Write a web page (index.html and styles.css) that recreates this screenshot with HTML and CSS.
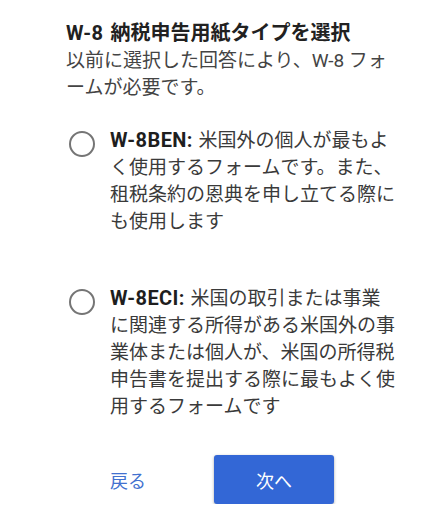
FILE: index.html
```html
<!DOCTYPE html>
<html lang="ja">
<head>
<meta charset="utf-8">
<link rel="stylesheet" href="styles.css">
</head>
<body>
<main class="page">
  <h1 class="title"><span class="title-code">W-8</span> 納税申告用紙タイプを選択</h1>
  <p class="subtitle">以前に選択した回答により、W-8 フォームが必要です。</p>
  <div class="options">
    <label class="option">
      <span class="radio"></span>
      <span class="option-text"><b class="code">W-8BEN:</b> 米国外の個人が最もよく使用するフォームです。また、租税条約の恩典を申し立てる際にも使用します</span>
    </label>
    <label class="option">
      <span class="radio"></span>
      <span class="option-text"><b class="code">W-8ECI:</b> 米国の取引または事業に関連する所得がある米国外の事業体または個人が、米国の所得税申告書を提出する際に最もよく使用するフォームです</span>
    </label>
  </div>
  <div class="actions">
    <span class="back">戻る</span>
    <span class="next">次へ</span>
  </div>
</main>
</body>
</html>
```

FILE: styles.css
```css
html, body {
  margin: 0;
  padding: 0;
  background: #ffffff;
}

.page {
  font-family: Roboto, "Noto Sans CJK JP", sans-serif;
  padding: 19.5px 0 0 66px;
  width: 330px;
  color: #3c3c3c;
}

.title {
  margin: 0;
  font-size: 20px;
  line-height: 27px;
  font-weight: 700;
  color: #212121;
}

.title-code {
  letter-spacing: 0.4px;
  margin-right: 2px;
}

.subtitle {
  margin: 0;
  font-size: 19px;
  line-height: 27px;
  color: #444444;
}

.options {
  display: flex;
  flex-direction: column;
  gap: 50px;
  margin-top: 26px;
}

.option {
  display: flex;
  align-items: flex-start;
  gap: 15.5px;
  padding-left: 2.5px;
}

.radio {
  flex: none;
  box-sizing: border-box;
  width: 26px;
  height: 26px;
  margin-top: 4.5px;
  border: 2.5px solid #757575;
  border-radius: 50%;
}

.option-text {
  width: 286px;
  font-size: 19px;
  line-height: 27px;
  color: #3a3a3a;
}

.code {
  color: #1e1e1e;
  font-weight: 700;
  font-size: 20px;
  line-height: 1;
  letter-spacing: 0.4px;
  margin-right: 1px;
}

.actions {
  display: flex;
  align-items: center;
  margin-top: 35.5px;
  padding-left: 44px;
}

.back {
  font-size: 18px;
  color: #4271cf;
  width: 104px;
}

.next {
  display: flex;
  align-items: center;
  justify-content: center;
  width: 120px;
  height: 49px;
  background: #3367d6;
  color: #ffffff;
  font-size: 18px;
  border-radius: 3px;
  box-shadow: 0 1px 3px rgba(0, 0, 0, 0.35);
}
```
